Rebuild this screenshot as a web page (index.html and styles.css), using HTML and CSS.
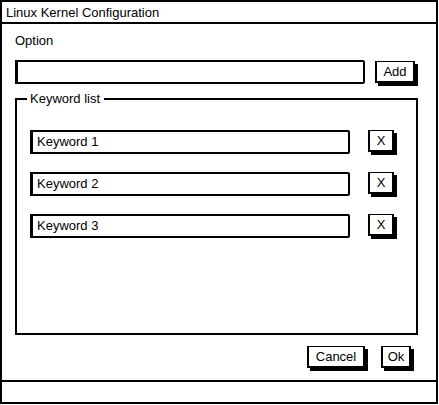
FILE: index.html
```html
<!DOCTYPE html>
<html lang="en">
<head>
    <meta charset="UTF-8">
    <title>Linux Kernel Configuration</title>
    <link rel="stylesheet" href="styles.css">
</head>
<body>
    <div class="window">
        <div class="titlebar">Linux Kernel Configuration</div>

        <div class="content">
            <div class="label">Option</div>
            <div class="option-row">
                <div class="textbox"></div>
                <button class="btn btn-add">Add</button>
            </div>

            <fieldset class="group">
                <legend>Keyword list</legend>
                <div class="keyword-row">
                    <div class="textbox keyword">Keyword 1</div>
                    <button class="btn btn-x">X</button>
                </div>
                <div class="keyword-row">
                    <div class="textbox keyword">Keyword 2</div>
                    <button class="btn btn-x">X</button>
                </div>
                <div class="keyword-row">
                    <div class="textbox keyword">Keyword 3</div>
                    <button class="btn btn-x">X</button>
                </div>
            </fieldset>

            <div class="actions">
                <button class="btn btn-cancel">Cancel</button>
                <button class="btn btn-ok">Ok</button>
            </div>
        </div>

        <div class="statusbar"></div>
    </div>
</body>
</html>
```

FILE: styles.css
```css
body {
    margin: 0;
    background: #fff;
    font-family: "Liberation Sans", Arial, sans-serif;
    font-size: 13px;
    color: #000;
}

.window {
    width: 438px;
    height: 404px;
    box-sizing: border-box;
    border: 2px solid #000;
    display: flex;
    flex-direction: column;
}

.titlebar {
    height: 22px;
    line-height: 20px;
    padding: 1px 0 0 4px;
    box-sizing: border-box;
    border-bottom: 2px solid #000;
}

.content {
    flex: 1;
    padding: 9px 18px 0 13px;
    display: flex;
    flex-direction: column;
}

.label {
    line-height: 16px;
    margin-bottom: 11px;
}

.option-row {
    display: flex;
    gap: 10px;
}

.textbox {
    height: 24px;
    box-sizing: border-box;
    border: 2px solid #000;
    border-left-width: 3px;
    border-radius: 0 2px 2px 0;
    background: #fff;
}

.option-row .textbox {
    flex: 1;
}

.btn {
    font-family: inherit;
    font-size: 13px;
    color: #000;
    background: #fff;
    border: 2px solid #000;
    border-width: 1px 2px 2px 2px;
    box-shadow: 3px 3px 0 #000;
    padding: 0;
    height: 22px;
    line-height: 18px;
    cursor: pointer;
}

.btn-add {
    width: 40px;
    margin: 1px 3px 0 0;
}

.group {
    margin: 7px 0 0 0;
    padding: 23px 0 0 13px;
    height: 244px;
    box-sizing: border-box;
    border: 2px solid #000;
    display: flex;
    flex-direction: column;
    gap: 18px;
}

/* legend sits close to the left corner of the frame */
.group legend {
    margin-left: -3px;
    padding: 0 4px 0 3px;
    line-height: 16px;
}

.keyword-row {
    display: flex;
    gap: 18px;
}

.keyword {
    width: 320px;
    padding-left: 4px;
    line-height: 20px;
}

.btn-x {
    width: 26px;
}

.actions {
    display: flex;
    justify-content: flex-end;
    gap: 16px;
    margin-top: 11px;
    padding-right: 7px;
}

.btn-cancel {
    width: 58px;
}

.btn-ok {
    width: 30px;
}

.statusbar {
    height: 20px;
    border-top: 2px solid #000;
}
```
